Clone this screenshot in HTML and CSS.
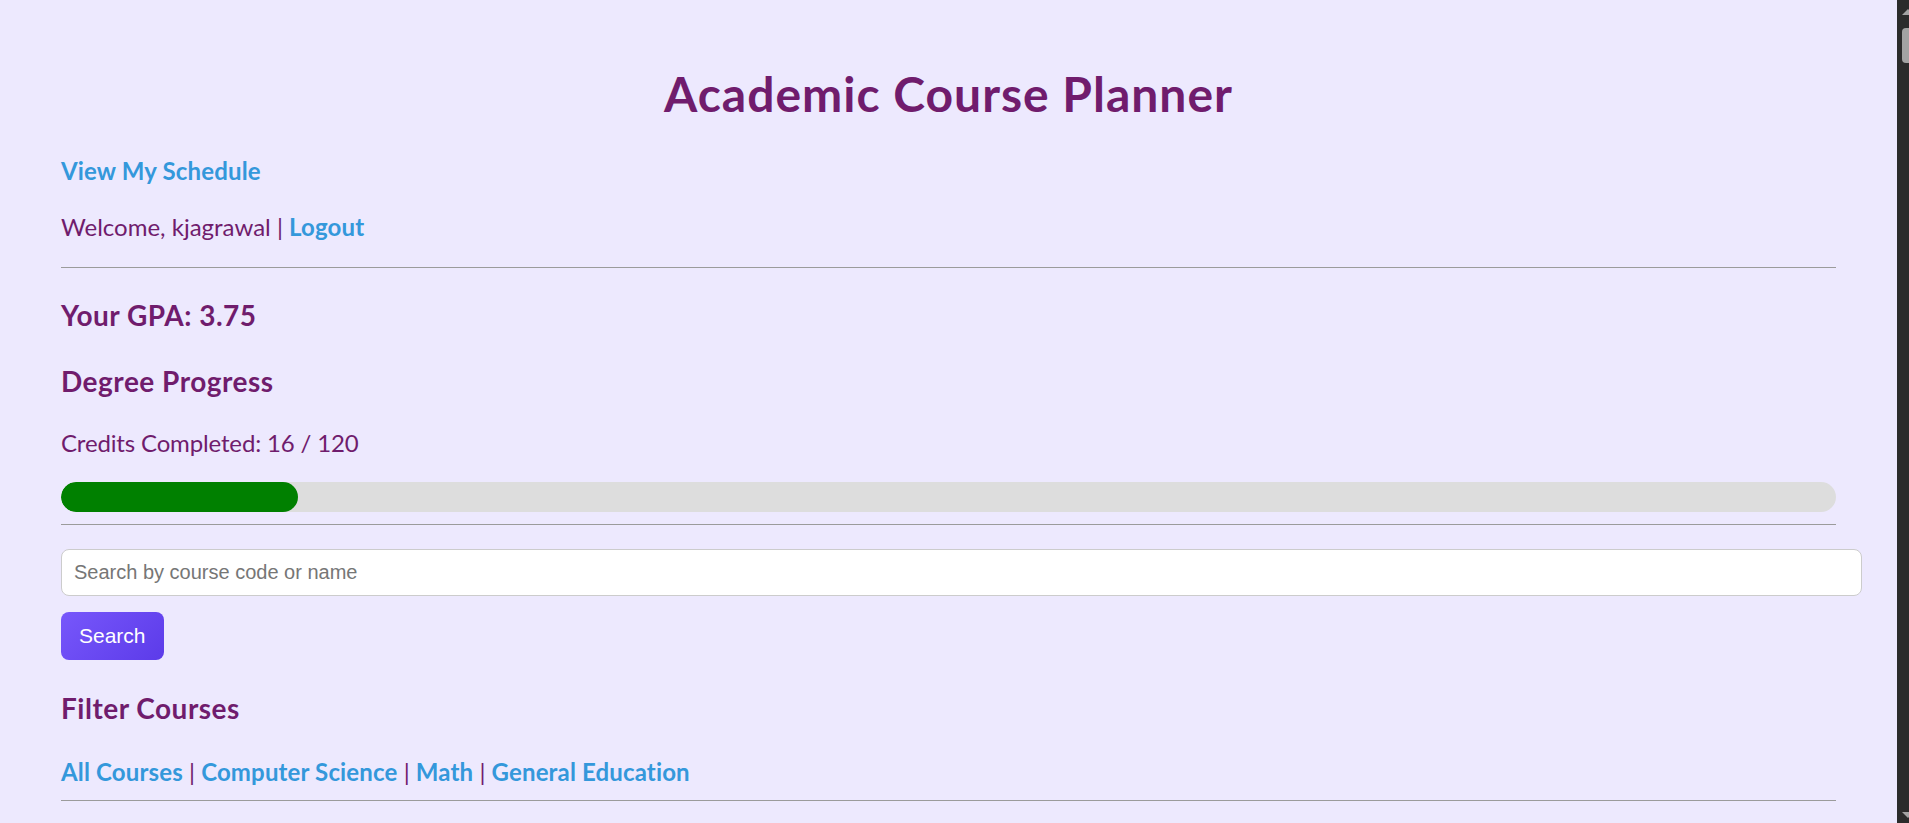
FILE: index.html
```html
<!DOCTYPE html>
<html lang="en">
<head>
<meta charset="utf-8">
<title>Academic Course Planner</title>
<link rel="stylesheet" href="styles.css">
</head>
<body>
<main class="page">
  <h1 class="title">Academic Course Planner</h1>
  <p class="line"><a class="link" href="#">View My Schedule</a></p>
  <p class="line welcome">Welcome, kjagrawal | <a class="link" href="#">Logout</a></p>
  <hr class="rule rule-top">
  <h3 class="heading gpa">Your GPA: 3.75</h3>
  <h3 class="heading degree">Degree Progress</h3>
  <p class="line credits">Credits Completed: 16 / 120</p>
  <div class="progress"><div class="progress-fill" style="width: 13.33%"></div></div>
  <hr class="rule rule-mid">
  <form class="search" onsubmit="return false">
    <input class="search-input" type="text" placeholder="Search by course code or name">
    <button class="search-btn" type="submit">Search</button>
  </form>
  <h3 class="heading filter">Filter Courses</h3>
  <p class="line filters"><a class="link" href="#">All Courses</a> | <a class="link" href="#">Computer Science</a> | <a class="link" href="#">Math</a> | <a class="link" href="#">General Education</a></p>
  <hr class="rule rule-bottom">
</main>
<aside class="scrollbar" aria-hidden="true">
  <div class="sb-up"></div>
  <div class="sb-thumb"></div>
  <div class="sb-down"></div>
</aside>
</body>
</html>
```
FILE: styles.css
```css
html, body {
  margin: 0;
  padding: 0;
  background: #ede9fe;
  overflow: hidden;
}
body {
  font-family: Lato, "Open Sans", sans-serif;
  color: #701c6d;
  font-size: 24px;
}
.page {
  padding: 66px 73px 0 61px;
  display: flex;
  flex-direction: column;
}
.title {
  margin: 0 0 33px;
  font-size: 48px;
  line-height: 56px;
  font-weight: 700;
  letter-spacing: 1px;
  text-align: center;
}
.line {
  margin: 0;
  font-size: 24px;
  line-height: 32px;
}
.welcome { margin-top: 24px; }
.link {
  color: #3498db;
  font-weight: 700;
  text-decoration: none;
  letter-spacing: 0.15px;
}
.credits { letter-spacing: -0.15px; }
.rule {
  margin: 0;
  border: 0;
  border-top: 1px solid #9b9b9b;
  height: 0;
}
.rule-top { margin-top: 24px; }
.heading {
  margin: 0;
  font-size: 28px;
  line-height: 36px;
  font-weight: 700;
  letter-spacing: 0.5px;
}
.gpa { margin-top: 29px; }
.degree { margin-top: 30px; }
.credits { margin-top: 28px; }
.progress {
  margin-top: 23px;
  height: 30px;
  border-radius: 15px;
  background: #dddddd;
  overflow: hidden;
}
.progress-fill {
  height: 100%;
  background: #008000;
  border-radius: 15px;
}
.rule-mid { margin-top: 12px; }
.search {
  margin: 24px 0 0;
  display: flex;
  flex-direction: column;
  align-items: flex-start;
  gap: 16px;
}
.search-input {
  box-sizing: content-box;
  width: 100%;
  margin: 0;
  padding: 11px 12px;
  line-height: 23px;
  height: 23px;
  font-family: "Liberation Sans", Arial, sans-serif;
  font-size: 20px;
  color: #222;
  background: #fff;
  border: 1.5px solid #cccccc;
  border-radius: 8px;
  outline: none;
}
.search-input::placeholder { color: #767676; }
.search-btn {
  margin: 0;
  height: 48px;
  padding: 0 18px;
  font-family: "Liberation Sans", Arial, sans-serif;
  font-size: 21px;
  line-height: 24px;
  color: #fff;
  border: 0;
  border-radius: 8px;
  background: linear-gradient(135deg, #7757fb 0%, #5c3be9 100%);
}
.filter { margin-top: 30px; }
.filters { margin-top: 30px; }
.rule-bottom { margin-top: 12px; }

.scrollbar {
  position: fixed;
  top: 0;
  right: 0;
  width: 12px;
  height: 100%;
  background: #2b2b2b;
  overflow: hidden;
}
.sb-up {
  position: absolute;
  top: 9px;
  left: 5px;
  width: 0;
  height: 0;
  border-left: 6px solid transparent;
  border-right: 6px solid transparent;
  border-bottom: 6px solid #a3a3a3;
}
.sb-thumb {
  position: absolute;
  top: 28px;
  left: 5px;
  width: 12px;
  height: 35px;
  border-radius: 4px;
  background: #a3a3a3;
}
.sb-down {
  position: absolute;
  bottom: 5px;
  left: 5px;
  width: 0;
  height: 0;
  border-left: 6px solid transparent;
  border-right: 6px solid transparent;
  border-top: 6px solid #a3a3a3;
}
```
